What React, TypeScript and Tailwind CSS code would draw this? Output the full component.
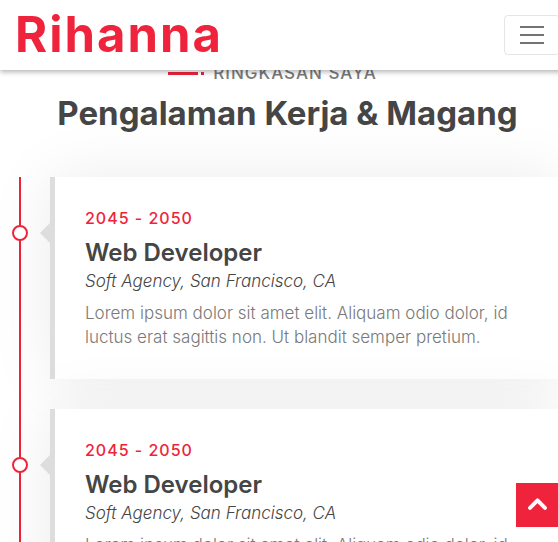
const jobs = [
  {
    id: 1,
    years: '2045 - 2050',
    title: 'Web Developer',
    place: 'Soft Agency, San Francisco, CA',
    text: 'Lorem ipsum dolor sit amet elit. Aliquam odio dolor, id luctus erat sagittis non. Ut blandit semper pretium.',
  },
  {
    id: 2,
    years: '2045 - 2050',
    title: 'Web Developer',
    place: 'Soft Agency, San Francisco, CA',
    text: 'Lorem ipsum dolor sit amet elit. Aliquam odio dolor, id luctus erat sagittis non. Ut blandit semper pretium.',
  },
];

function Navbar() {
  return (
    <header className="fixed top-0 left-0 z-10 flex h-[70px] w-[calc(100%+17px)] items-center justify-between bg-white px-[15px] shadow-[0_2px_5px_rgba(0,0,0,0.3)]">
      <a href="#home" className="text-[49px] leading-[70px] font-bold tracking-[2px] text-[#ef233c]">
        Rihanna
      </a>
      <button
        type="button"
        aria-label="Menu"
        className="flex h-10 w-14 items-center justify-center rounded-sm border border-black/10"
      >
        <svg viewBox="0 0 30 30" className="size-[30px]" stroke="rgba(0,0,0,0.55)" strokeWidth="2">
          <path d="M3 7h24M3 15h24M3 23h24" />
        </svg>
      </button>
    </header>
  );
}

function SectionHeader() {
  return (
    <div className="flex flex-col items-center">
      <p className="flex items-center pr-[30px] text-[17px] leading-6 font-medium tracking-[1px] text-[#797979]">
        <span className="mr-[3px] h-[3px] w-[30px] bg-[#ef233c]" />
        <span className="mr-[9px] size-[3px] bg-[#ef233c]" />
        RINGKASAN SAYA
      </p>
      <h2 className="mt-2 text-[33px] leading-10 font-bold whitespace-nowrap text-[#454545]">
        Pengalaman Kerja &amp; Magang
      </h2>
    </div>
  );
}

function Job({ years, title, place, text }: { years: string; title: string; place: string; text: string }) {
  return (
    <li className="relative border-l-[5px] border-[#dddddd] bg-white p-[30px] shadow-[0_0_60px_rgba(0,0,0,0.08)]">
      <span className="absolute top-[48px] left-[-43px] size-4 rounded-full border-2 border-[#ef233c] bg-white" />
      <span className="absolute top-[46px] left-[-15px] border-y-[10px] border-r-[10px] border-y-transparent border-r-[#dddddd]" />
      <p className="text-base leading-[22px] font-medium tracking-[1px] text-[#ef233c]">{years}</p>
      <h3 className="mt-2.5 text-[24px] leading-7 font-semibold text-[#454545]">{title}</h3>
      <p className="mt-0.5 text-[17px] leading-6 font-light text-[#454545] italic">{place}</p>
      <p className="mt-2 text-[17px] leading-6 font-light text-[#797979]">{text}</p>
    </li>
  );
}

export default function App() {
  return (
    <div className="relative h-screen overflow-hidden bg-white font-['Inter',sans-serif]">
      <Navbar />
      <main className="w-[calc(100%+17px)] px-[15px] pt-[61px]">
        <SectionHeader />
        <div className="relative mt-11 ml-1 border-l-2 border-[#ef233c] pl-[29px]">
          <ol className="flex flex-col gap-[30px]">
            {jobs.map((job) => (
              <Job key={job.id} years={job.years} title={job.title} place={job.place} text={job.text} />
            ))}
          </ol>
        </div>
      </main>
      <button
        type="button"
        aria-label="Back to top"
        className="fixed right-[-2px] bottom-[15px] flex size-11 items-center justify-center bg-[#ef233c] text-white"
      >
        <svg viewBox="0 0 44 44" className="size-11" fill="none" stroke="currentColor" strokeWidth="4" strokeLinecap="round" strokeLinejoin="round">
          <path d="M14 24.8L21.5 17.4L29 24.8" />
        </svg>
      </button>
    </div>
  );
}
